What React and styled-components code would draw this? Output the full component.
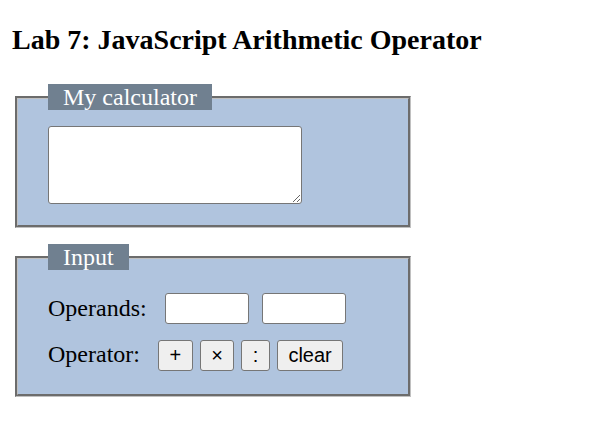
import React from "react";
import styled, { createGlobalStyle } from "styled-components";

const Global = createGlobalStyle`
  html, body { margin: 0; padding: 0; background: #fff; }
  body { font-family: "Liberation Serif", "Times New Roman", serif; color: #000; }
`;

const Page = styled.div`
  padding: 0 8px;
`;

const Title = styled.h2`
  margin: 24px 0 0 4px;
  font-size: 28px;
  font-weight: bold;
  line-height: normal;
`;

const Panel = styled.fieldset`
  box-sizing: border-box;
  width: 396px;
  margin: ${(p) => p.$top}px 0 0 7px;
  padding: ${(p) => p.$padTop}px 30px ${(p) => p.$padBottom}px;
  border: 3px groove silver;
  background: #b0c4de;
  min-inline-size: 0;
`;

const Legend = styled.legend`
  padding: 0 15px;
  margin: 0;
  background: #708090;
  color: #fff;
  font-size: 24px;
  line-height: 26px;
`;

const Display = styled.textarea`
  display: block;
  box-sizing: border-box;
  width: 254px;
  height: 78px;
  margin: 0;
  border: 1px solid #767676;
  border-radius: 3px;
  background: #fff;
  font-family: "Liberation Mono", monospace;
  font-size: 13px;
`;

const Row = styled.div`
  display: flex;
  align-items: ${(p) => p.$align};
  & + & {
    margin-top: 16px;
  }
`;

const Label = styled.span`
  font-size: 24px;
  line-height: normal;
  margin-right: ${(p) => p.$gap}px;
`;

const Operand = styled.input`
  box-sizing: border-box;
  width: 84px;
  height: 31px;
  margin: 0 13px 0 0;
  padding: 0 2px;
  border: 1px solid #767676;
  border-radius: 3px;
  background: #fff;
  font-family: "Liberation Serif", serif;
  font-size: 24px;
`;

const OpButton = styled.button`
  box-sizing: border-box;
  height: 31px;
  margin: 0 7px 0 0;
  padding: 0 10.5px;
  border: 1px solid #767676;
  border-radius: 3px;
  background: #efefef;
  color: #000;
  font-family: "Liberation Sans", Arial, sans-serif;
  font-size: 20px;
  line-height: normal;
`;

export default function App() {
  return (
    <Page>
      <Global />
      <Title>Lab 7: JavaScript Arithmetic Operator</Title>
      <Panel $top={28} $padTop={16} $padBottom={21}>
        <Legend>My calculator</Legend>
        <Display />
      </Panel>
      <Panel $top={16} $padTop={23} $padBottom={23}>
        <Legend>Input</Legend>
        <Row $align="center">
          <Label $gap={18}>Operands:</Label>
          <Operand type="text" />
          <Operand type="text" />
        </Row>
        <Row $align="baseline">
          <Label $gap={18}>Operator:</Label>
          <OpButton>+</OpButton>
          <OpButton>×</OpButton>
          <OpButton>:</OpButton>
          <OpButton>clear</OpButton>
        </Row>
      </Panel>
    </Page>
  );
}
